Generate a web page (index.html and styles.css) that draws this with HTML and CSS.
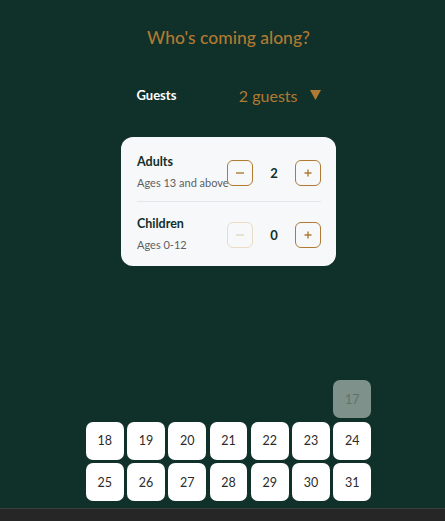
FILE: index.html
```html
<!DOCTYPE html>
<html lang="en">
<head>
<meta charset="utf-8">
<title>Guests</title>
<link rel="stylesheet" href="styles.css">
</head>
<body>
<div class="page">
  <div class="top-title">Enjoy your journey</div>
  <h2 class="heading">Who's coming along?</h2>
  <div class="guests-row">
    <span class="guests-label">Guests</span>
    <span class="guests-value">2 guests
      <svg class="caret" width="11" height="10" viewBox="0 0 11 10"><path d="M0 0 H11 L5.5 10 Z" fill="#b07a32"/></svg>
    </span>
  </div>
  <div class="card">
    <div class="row row-first">
      <div class="info">
        <div class="title">Adults</div>
        <div class="sub">Ages 13 and above</div>
      </div>
      <div class="controls">
        <button class="btn" aria-label="Decrease adults"><svg width="10" height="10" viewBox="0 0 10 10"><path d="M1 5 H9" stroke="currentColor" stroke-width="1.4"/></svg></button>
        <span class="count">2</span>
        <button class="btn" aria-label="Increase adults"><svg width="10" height="10" viewBox="0 0 10 10"><path d="M1.5 5 H8.5 M5 1.5 V8.5" stroke="currentColor" stroke-width="1.4"/></svg></button>
      </div>
    </div>
    <div class="row row-last">
      <div class="info">
        <div class="title">Children</div>
        <div class="sub">Ages 0-12</div>
      </div>
      <div class="controls">
        <button class="btn btn-disabled" aria-label="Decrease children"><svg width="10" height="10" viewBox="0 0 10 10"><path d="M1 5 H9" stroke="currentColor" stroke-width="1.4"/></svg></button>
        <span class="count">0</span>
        <button class="btn" aria-label="Increase children"><svg width="10" height="10" viewBox="0 0 10 10"><path d="M1.5 5 H8.5 M5 1.5 V8.5" stroke="currentColor" stroke-width="1.4"/></svg></button>
      </div>
    </div>
  </div>
  <div class="calendar">
    <div class="empty"></div><div class="empty"></div><div class="empty"></div><div class="empty"></div><div class="empty"></div><div class="empty"></div>
    <div class="day day-past">17</div>
    <div class="day">18</div><div class="day">19</div><div class="day">20</div><div class="day">21</div><div class="day">22</div><div class="day">23</div><div class="day">24</div>
    <div class="day">25</div><div class="day">26</div><div class="day">27</div><div class="day">28</div><div class="day">29</div><div class="day">30</div><div class="day">31</div>
  </div>
</div>
<div class="bottom-bar"></div>
</body>
</html>
```
FILE: styles.css
```css
html, body {
  margin: 0;
  padding: 0;
  height: 521px;
  overflow: hidden;
}
body {
  background: #10302a;
  font-family: Lato, "Open Sans", sans-serif;
  display: flex;
  flex-direction: column;
}
.page {
  flex: 1;
  display: flex;
  flex-direction: column;
  align-items: center;
  padding-left: 12px;
}
.top-title {
  align-self: flex-start;
  padding-left: 66px;
  color: #ffffff;
  font-size: 20px;
  line-height: 24px;
  margin-top: -25px;
  font-weight: 700;
}
.heading {
  margin: 27px 0 0;
  font-size: 17.5px;
  line-height: 24px;
  font-weight: 500;
  color: #b07a32;
}
.guests-row {
  margin-top: 33px;
  width: 184px;
  height: 24px;
  display: flex;
  justify-content: space-between;
  align-items: center;
}
.guests-label {
  color: #ffffff;
  font-weight: 700;
  font-size: 13px;
}
.guests-value {
  color: #b07a32;
  font-size: 16px;
  display: flex;
  align-items: center;
  gap: 12px;
}
.caret { display: block; }
.card {
  margin-top: 30px;
  width: 215px;
  box-sizing: border-box;
  padding: 17px 15px 13px 16px;
  background: #f7f8fa;
  border-radius: 12px;
}
.row {
  display: flex;
  justify-content: space-between;
  align-items: center;
}
.row-first {
  padding-bottom: 10px;
  border-bottom: 1px solid #e4e6e9;
}
.row-last {
  padding-top: 14px;
}
.info {
  display: flex;
  flex-direction: column;
  gap: 5px;
  min-width: 0;
  white-space: nowrap;
}
.title {
  font-size: 12.5px;
  line-height: 16px;
  font-weight: 700;
  color: #10302a;
}
.sub {
  font-size: 11px;
  line-height: 16px;
  color: #5b5f63;
}
.controls {
  display: flex;
  align-items: center;
  flex-shrink: 0;
}
.btn {
  width: 26px;
  height: 26px;
  box-sizing: border-box;
  padding: 0;
  border: 1px solid #b07a32;
  border-radius: 6px;
  background: transparent;
  color: #b07a32;
  display: flex;
  align-items: center;
  justify-content: center;
}
.btn svg { display: block; }
.btn-disabled {
  border-color: #eadcc6;
  color: #e4d5be;
}
.count {
  width: 42px;
  text-align: center;
  font-size: 13px;
  font-weight: 700;
  color: #10302a;
}
.calendar {
  margin-top: 114px;
  width: 285px;
  display: grid;
  grid-template-columns: repeat(7, 1fr);
  gap: 3.5px;
}
.day, .empty {
  height: 38px;
}
.day {
  background: #ffffff;
  border-radius: 7px;
  display: flex;
  align-items: center;
  justify-content: center;
  font-size: 12.5px;
  color: #2b2b2b;
}
.day-past {
  background: #7e918a;
  color: #5f716b;
}
.bottom-bar {
  height: 12px;
  background: #262626;
  border-top: 1px solid #3d3d3d;
}
```
